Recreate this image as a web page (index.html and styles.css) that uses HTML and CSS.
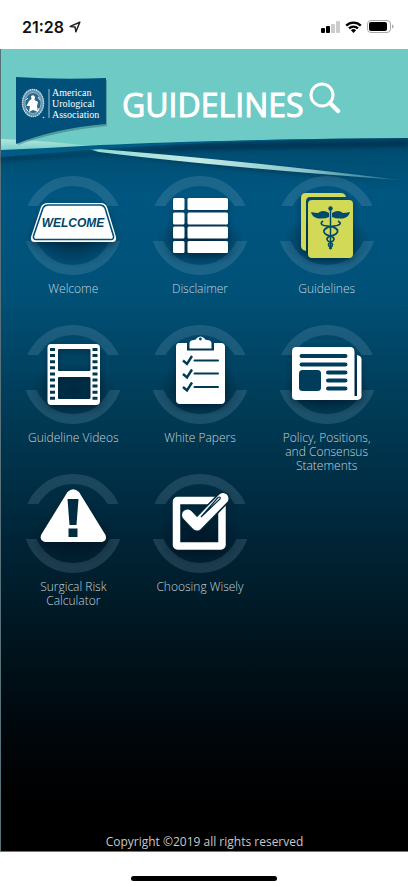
FILE: index.html
```html
<!DOCTYPE html>
<html lang="en">
<head>
    <meta charset="UTF-8">
    <meta name="viewport" content="width=device-width, initial-scale=1.0">
    <title>AUA Guidelines</title>
    <link rel="stylesheet" href="styles.css">
</head>
<body>
    <!-- Status Bar -->
    <div class="status-bar">
        <div class="status-left">
            <span class="time">21:28</span>
            <svg width="12" height="12" viewBox="0 0 12 12">
                <path d="M10.8 1.2 L1.2 5.4 L6.1 6.1 L6.9 10.8 Z" fill="none" stroke="#222" stroke-width="1.5" stroke-linejoin="round"/>
            </svg>
        </div>
        <div class="status-right">
            <svg width="19" height="12" viewBox="0 0 19 12">
                <rect x="0" y="7" width="4" height="5" rx="1"/>
                <rect x="5" y="5" width="4" height="7" rx="1"/>
                <rect x="10" y="3" width="4" height="9" rx="1" fill="#ccc"/>
                <rect x="15" y="0" width="4" height="12" rx="1" fill="#ccc"/>
            </svg>
            <svg width="17" height="12" viewBox="0 0 17 12">
                <path d="M1.2 4.6 A10.3 10.3 0 0 1 15.8 4.6 M4 7.4 A6.4 6.4 0 0 1 13 7.4" fill="none" stroke="#000" stroke-width="2.2"/>
                <path d="M5.9 9.2 A3.8 3.8 0 0 1 11.1 9.2 L8.5 12 Z"/>
            </svg>
            <svg width="27" height="13" viewBox="0 0 27 13">
                <rect x="0.5" y="0.5" width="23" height="12" rx="3.5" fill="none" stroke="#aaa"/>
                <rect x="2" y="2" width="18" height="9" rx="2"/>
                <path d="M25 4.5 Q26.6 5 26.6 6.5 Q26.6 8 25 8.5 Z" fill="#aaa"/>
            </svg>
        </div>
    </div>

    <div class="app">
        <!-- Header -->
        <header class="header">
            <svg class="swoosh" viewBox="0 0 408 127" preserveAspectRatio="none">
                <defs>
                    <linearGradient id="pale" x1="0" y1="0" x2="0" y2="1">
                        <stop offset="0" stop-color="#b4e6df"/>
                        <stop offset="1" stop-color="#6dcac5"/>
                    </linearGradient>
                    <linearGradient id="stripe" x1="0" y1="0" x2="1" y2="0">
                        <stop offset="0" stop-color="#8fd8d1"/>
                        <stop offset="0.35" stop-color="#c4ebe6"/>
                        <stop offset="0.7" stop-color="#8cc5c9"/>
                        <stop offset="1" stop-color="#1c6d8c"/>
                    </linearGradient>
                    <filter id="soft" x="-10%" y="-50%" width="120%" height="200%">
                        <feGaussianBlur stdDeviation="2"/>
                    </filter>
                </defs>
                <path d="M0 108 L88 104 L204 95 L408 91 V98 L204 101 L100 105 L0 112 Z" fill="#002c47" opacity="0.7" filter="url(#soft)"/>
                <path d="M90 103 Q230 114 400 133 Q220 120 110 105 Z" fill="#00304a" opacity="0.7" filter="url(#soft)"/>
                <path d="M0 0 H408 V89 Q230 90 100 97 Q45 101 0 103 Z" fill="#6dcac5"/>
                <path d="M0 90 Q50 92 90 97 L0 103 Z" fill="url(#pale)"/>
                <path d="M85 99 Q230 110 400 131 Q220 118 98 103 Z" fill="url(#stripe)"/>
                <path d="M0 101 Q50 99 100 96 Q200 91 408 89 Q230 91 100 100 Q50 104 0 108 Z" fill="#005c85"/>
            </svg>
            <div class="header-content">
                <a class="logo" href="#">
                    <svg class="flag" width="92" height="70" viewBox="0 0 92 70">
                        <path d="M1 2 Q46 4 91 3 V49 Q40 54 2 68 Z" fill="#28545f" opacity="0.4"/>
                        <path d="M0 0 Q44 3 90 1 V47 Q40 51 0 67 Z" fill="#00507a"/>
                        <ellipse cx="17" cy="26" rx="11" ry="14" fill="#5f93ad"/>
                        <ellipse cx="17" cy="26" rx="10.5" ry="13.5" fill="none" stroke="#c6dae3" stroke-width="1.4" stroke-dasharray="1.5 0.7"/>
                        <ellipse cx="17" cy="26" rx="8" ry="10.5" fill="#29688b" stroke="#a9c7d5" stroke-width="0.7"/>
                        <path d="M15 19 Q18 17 19 20 L18.5 23 L22 25 L21 29 L22 35 L17 33 L13 35 L14 29 L10.5 29 L13 24 L15.5 22 Z" fill="#fff"/>
                        <path d="M10 23 L12 21 M22 20 L24 23 M10 32 L12 34 M23 31 L22 34" stroke="#dbe8ee" stroke-width="1"/>
                        <circle cx="27.5" cy="40.5" r="0.8" fill="#cfe0e8"/>
                        <path d="M33 12 V41" stroke="#a5c3d2" stroke-width="1"/>
                    </svg>
                    <span class="logo-text">American<br>Urological<br>Association</span>
                </a>
                <h1>GUIDELINES</h1>
                <button class="search" type="button" aria-label="Search">
                    <svg width="32" height="32" viewBox="0 0 32 32">
                        <circle cx="13" cy="13" r="11" fill="none" stroke="#fff" stroke-width="3"/>
                        <path d="M21 21 L29 29" stroke="#fff" stroke-width="4.5" stroke-linecap="round"/>
                    </svg>
                </button>
            </div>
        </header>

        <!-- Menu -->
        <main class="menu">
            <a class="tile" href="#">
                <svg class="icon" viewBox="0 0 100 100">
                    <use href="#ring"/>
                    <g class="glyph">
                        <path d="M25 27 H78 Q82 27 84 31 L93 61 Q94 66 89 66 H12 Q7 66 8 61 L18 31 Q20 27 25 27 Z" fill="#fff"/>
                        <path d="M25 29 H77 Q80.5 29 82 32 L90.5 60 Q91 63.5 88 63.5 H13 Q10 63.5 10.5 60 L20 32 Q21.5 29 25 29 Z" fill="#fff" stroke="#004e75" stroke-width="1.6"/>
                    </g>
                    <text class="welcome-text" x="50" y="51" text-anchor="middle">WELCOME</text>
                </svg>
                <span class="label">Welcome</span>
            </a>

            <a class="tile" href="#">
                <svg class="icon" viewBox="0 0 100 100">
                    <use href="#ring"/>
                    <g class="glyph" fill="#fff">
                        <rect x="23" y="22" width="11.5" height="12" rx="1.5"/>
                        <rect x="37.5" y="22" width="40.5" height="12" rx="1.5"/>
                        <rect x="23" y="36.5" width="11.5" height="12" rx="1.5"/>
                        <rect x="37.5" y="36.5" width="40.5" height="12" rx="1.5"/>
                        <rect x="23" y="50.5" width="11.5" height="12" rx="1.5"/>
                        <rect x="37.5" y="50.5" width="40.5" height="12" rx="1.5"/>
                        <rect x="23" y="65" width="11.5" height="12" rx="1.5"/>
                        <rect x="37.5" y="65" width="40.5" height="12" rx="1.5"/>
                    </g>
                </svg>
                <span class="label">Disclaimer</span>
            </a>

            <a class="tile" href="#">
                <svg class="icon" viewBox="0 0 100 100">
                    <use href="#ring"/>
                    <g class="glyph" fill="#d1d956">
                        <path d="M29 17 H64 Q68 17 69 21 H33 Q29 21 29 26 V75 Q24 74 24 70 V22 Q24 17 29 17 Z"/>
                        <rect x="31" y="24" width="45" height="58" rx="4"/>
                    </g>
                    <g fill="#004a6b">
                        <circle cx="53.5" cy="32.5" r="2.2"/>
                        <path d="M52 37 Q46 33 41 37 Q38 37 34 36 Q35 41 41 42.5 Q48 43 52 41 Z"/>
                        <path d="M55 37 Q61 33 66 37 Q69 37 73 36 Q72 41 66 42.5 Q59 43 55 41 Z"/>
                    </g>
                    <path d="M53.5 33 V73" stroke="#004a6b" stroke-width="1.5"/>
                    <path d="M46 45 Q42 48 47 49.5 Q62 51 60.5 56 Q59 59 53.5 60 Q48 62 51 65 Q57 67 55 70 L52.5 73 M61 45 Q66 48 60 49.5 Q46 51 47 56 Q48 59 53.5 60 Q59 62 56 65 Q50 67 52 70 L54.5 73" fill="none" stroke="#004a6b" stroke-width="1.7"/>
                </svg>
                <span class="label">Guidelines</span>
            </a>

            <a class="tile" href="#">
                <svg class="icon" viewBox="0 0 100 100">
                    <use href="#ring"/>
                    <path class="glyph" fill="#fff" fill-rule="evenodd" d="M28 19 H73 Q77 19 77 23 V76 Q77 80 73 80 H28 Q24.5 80 24.5 76 V23 Q24.5 19 28 19 Z M36 24 Q35 24 35 25 V45 Q35 46 36 46 H66 Q67.5 46 67.5 45 V25 Q67.5 24 66 24 Z M36 52 Q35 52 35 53 V73 Q35 74 36 74 H66 Q67.5 74 67.5 73 V53 Q67.5 52 66 52 Z"/>
                    <path d="M29.5 23 V77 M72 23 V77" stroke="#00364f" stroke-width="5" stroke-dasharray="3 3.1"/>
                </svg>
                <span class="label">Guideline Videos</span>
            </a>

            <a class="tile" href="#">
                <svg class="icon" viewBox="0 0 100 100">
                    <use href="#ring"/>
                    <g class="glyph" fill="#fff">
                        <path d="M29 18 H37 V25.5 H64 V18 H71 Q75 18 75 22 V75 Q75 79 71 79 H30 Q26 79 26 75 V22 Q26 18 29 18 Z"/>
                        <path fill-rule="evenodd" d="M39.5 23.5 V18 Q40 15 44 15 Q46 15 47 13 Q50.5 10 54 13 Q55 15 57 15 Q61 15 61.5 18 V23.5 Z M49 14 A1.4 1.4 0 0 0 51.8 14 A1.4 1.4 0 0 0 49 14 Z"/>
                    </g>
                    <g fill="none" stroke="#003a55" stroke-width="2">
                        <path d="M44.5 35.5 H68 M44.5 48.5 H68 M44.5 62 H68" stroke-linecap="round"/>
                        <path d="M33 35.5 L37 39 L42 31 M33 49 L37 52.5 L42 44.5 M33 62 L37 65.5 L42 57.5" stroke-width="2.4"/>
                    </g>
                </svg>
                <span class="label">White Papers</span>
            </a>

            <a class="tile" href="#">
                <svg class="icon" viewBox="0 0 100 100">
                    <use href="#ring"/>
                    <g class="glyph" fill="#fff">
                        <path d="M19 22 H73 Q77.5 22 77.5 27 V71 H80 V30 Q84.5 31 84.5 34 V71 Q84 75 80 75 H19 Q15 75 15 71 V27 Q15 22 19 22 Z"/>
                    </g>
                    <g stroke="#003d5b" stroke-width="4" stroke-linecap="round">
                        <path d="M24.5 31 H68.5 M24.5 39.5 H68.5 M51 47.5 H68.5 M51 55.5 H68.5 M51 63.5 H68.5"/>
                    </g>
                    <rect x="22" y="45" width="22" height="21" rx="3.5" fill="#003d5b"/>
                </svg>
                <span class="label">Policy, Positions,<br>and Consensus<br>Statements</span>
            </a>

            <a class="tile" href="#">
                <svg class="icon" viewBox="0 0 100 100">
                    <use href="#ring"/>
                    <path class="glyph" fill="#fff" d="M44.5 18 Q50 12.5 56 18 L82.5 61 Q84.5 67 79 68 H22 Q16.5 67 18 61 Z"/>
                    <path d="M44.5 25 H55.5 L53.5 51 H46.5 Z M45.5 54.5 H54.5 V63 H45.5 Z" fill="#002c42"/>
                </svg>
                <span class="label">Surgical Risk<br>Calculator</span>
            </a>

            <a class="tile" href="#">
                <svg class="icon" viewBox="0 0 100 100">
                    <use href="#ring"/>
                    <g class="glyph">
                        <rect x="26.5" y="26.5" width="45.5" height="45.5" rx="1" fill="none" stroke="#fff" stroke-width="7.5" stroke-linejoin="round"/>
                        <path d="M37.5 41 L47 51 L73 24.5" fill="none" stroke="#002a3f" stroke-width="14" stroke-linecap="round" stroke-linejoin="round"/>
                        <path d="M37.5 41 L47 51 L73 24.5" fill="none" stroke="#fff" stroke-width="11" stroke-linecap="round" stroke-linejoin="round"/>
                        <path d="M51 43 L68 23.5 Q71 22 70 25 Z" fill="#fff" stroke="#002a3f" stroke-width="1.2"/>
                    </g>
                </svg>
                <span class="label">Choosing Wisely</span>
            </a>
        </main>

        <footer class="footer">Copyright ©2019 all rights reserved</footer>
    </div>

    <div class="home-area"><div class="home-bar"></div></div>

    <!-- Shared ring behind each icon -->
    <svg class="defs" width="0" height="0" aria-hidden="true">
        <defs>
            <clipPath id="ring-clip">
                <rect x="0" y="0" width="100" height="30"/>
                <rect x="0" y="65" width="100" height="35"/>
            </clipPath>
            <radialGradient id="ring-shade">
                <stop offset="0" stop-color="#000c1c" stop-opacity="0.45"/>
                <stop offset="0.6" stop-color="#000c1c" stop-opacity="0.22"/>
                <stop offset="1" stop-color="#000c1c" stop-opacity="0"/>
            </radialGradient>
            <g id="ring">
                <circle cx="50" cy="49.5" r="44.5" fill="none" stroke="#8db4c8" stroke-opacity="0.19" stroke-width="10" clip-path="url(#ring-clip)"/>
                <ellipse cx="50" cy="65" rx="44" ry="27" fill="url(#ring-shade)"/>
            </g>
        </defs>
    </svg>
</body>
</html>
```

FILE: styles.css
```css
* {
    box-sizing: border-box;
}

body {
    margin: 0;
    min-height: 100vh;
    display: flex;
    flex-direction: column;
    background-color: white;
    font-family: "Open Sans", "Noto Sans", sans-serif;
}

svg {
    display: block;
}

.status-bar {
    height: 49px;
    padding: 4px 14px 0 22px;
    display: flex;
    justify-content: space-between;
    align-items: center;
}

.status-left, .status-right {
    display: flex;
    align-items: center;
    gap: 5px;
}

.time {
    font-family: Inter, sans-serif;
    font-size: 16px;
    font-weight: 600;
    line-height: 20px;
    color: #111;
}

.app {
    flex: 1;
    display: flex;
    flex-direction: column;
    border-left: 1px solid #59727a;
    border-bottom: 1px solid #777;
    background: linear-gradient(#004b6d 11%, #005680 18%, #005178 30%, #003b56 45%, #002639 60%, #001722 72%, #00080d 84%, #000 94%);
}

.header {
    display: grid;
}

.swoosh, .header-content {
    grid-area: 1 / 1;
}

.swoosh {
    width: 100%;
    height: 127px;
    overflow: visible;
}

.header-content {
    display: flex;
    align-items: flex-start;
    padding: 28px 15px 0;
}

.logo {
    display: grid;
    color: white;
    text-decoration: none;
}

.flag, .logo-text {
    grid-area: 1 / 1;
}

.logo-text {
    padding: 10px 0 0 36px;
    font-family: "Liberation Serif", serif;
    font-size: 10px;
    line-height: 11px;
}

h1 {
    margin: 8px 5px 0 14px;
    font-size: 32px;
    font-weight: 500;
    line-height: 40px;
    color: white;
    -webkit-text-stroke: 1px white;
}

.search {
    margin-top: 5px;
    padding: 0;
    border: none;
    background: none;
    cursor: pointer;
}

.menu {
    display: grid;
    grid-template-columns: repeat(3, 1fr);
    grid-auto-rows: minmax(149px, auto);
    padding: 0 18px 0 9px;
}

.tile {
    display: flex;
    flex-direction: column;
    align-items: center;
    gap: 6px;
    text-decoration: none;
}

.icon {
    width: 100px;
    height: 100px;
}

.glyph {
    filter: drop-shadow(0 3px 3px rgba(0, 15, 30, 0.4));
}

.welcome-text {
    font-family: "Liberation Sans", sans-serif;
    font-size: 12px;
    font-weight: bold;
    font-style: italic;
    fill: #004566;
}

.label {
    font-size: 12px;
    font-weight: 300;
    line-height: 14px;
    text-align: center;
    color: #c3d3dc;
}

.footer {
    margin-top: auto;
    font-size: 12px;
    line-height: 18px;
    text-align: center;
    color: #c8c8c8;
}

.home-area {
    height: 35px;
    padding-top: 24px;
}

.home-bar {
    width: 36%;
    height: 5px;
    margin: 0 auto;
    border-radius: 3px;
    background-color: black;
}

.defs {
    position: absolute;
}
```
